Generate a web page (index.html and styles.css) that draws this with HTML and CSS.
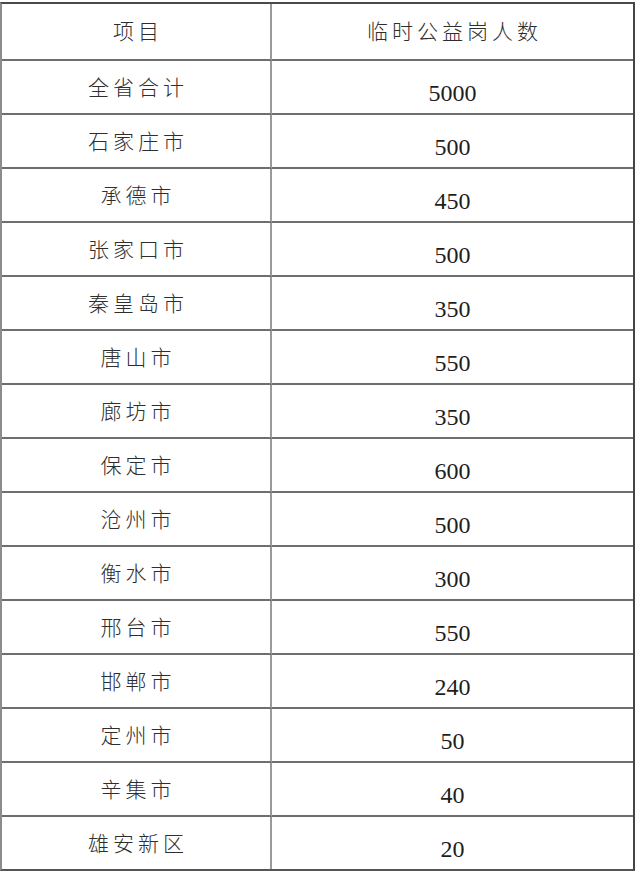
FILE: index.html
```html
<!DOCTYPE html>
<html lang="zh-CN">
<head>
<meta charset="utf-8">
<title>临时公益岗人数</title>
<link rel="stylesheet" href="styles.css">
</head>
<body>
<div class="sheet">
  <div class="cell name head">项目</div>
  <div class="cell head-num">临时公益岗人数</div>

  <div class="cell name">全省合计</div><div class="cell num" lang="en">5000</div>
  <div class="cell name">石家庄市</div><div class="cell num" lang="en">500</div>
  <div class="cell name">承德市</div><div class="cell num" lang="en">450</div>
  <div class="cell name">张家口市</div><div class="cell num" lang="en">500</div>
  <div class="cell name">秦皇岛市</div><div class="cell num" lang="en">350</div>
  <div class="cell name">唐山市</div><div class="cell num" lang="en">550</div>
  <div class="cell name">廊坊市</div><div class="cell num" lang="en">350</div>
  <div class="cell name">保定市</div><div class="cell num" lang="en">600</div>
  <div class="cell name">沧州市</div><div class="cell num" lang="en">500</div>
  <div class="cell name">衡水市</div><div class="cell num" lang="en">300</div>
  <div class="cell name">邢台市</div><div class="cell num" lang="en">550</div>
  <div class="cell name">邯郸市</div><div class="cell num" lang="en">240</div>
  <div class="cell name">定州市</div><div class="cell num" lang="en">50</div>
  <div class="cell name">辛集市</div><div class="cell num" lang="en">40</div>
  <div class="cell name last">雄安新区</div><div class="cell num last" lang="en">20</div>
</div>
</body>
</html>
```

FILE: styles.css
```css
html, body {
  margin: 0;
  padding: 0;
  background: #ffffff;
}

.sheet {
  margin-top: 2px;
  width: 635px;
  box-sizing: border-box;
  display: grid;
  grid-template-columns: 270px 361px;
  grid-template-rows: 57px repeat(14, 54px) 52px;
  border-top: 2px solid #4a4a4a;
  border-left: 2px solid #8c8c8c;
  border-right: 2px solid #444444;
  border-bottom: 2px solid #555555;
}

.cell {
  box-sizing: border-box;
  display: flex;
  align-items: center;
  justify-content: center;
  border-bottom: 2px solid #6e6e6e;
}

.cell.last {
  border-bottom: none;
}

.name,
.head-num {
  font-family: "Noto Sans CJK SC", "Noto Sans", sans-serif;
  font-size: 21px;
  font-weight: 300;
  letter-spacing: 4px;
  padding-left: 4px;
  padding-bottom: 3px;
  color: #2e2e2e;
}

.name {
  border-right: 2px solid #9a9a9a;
}

.num {
  font-family: "Liberation Serif", "Times New Roman", "Tinos", serif;
  font-size: 24px;
  font-weight: 400;
  color: #1e1e1e;
  padding-top: 12px;
}
```
